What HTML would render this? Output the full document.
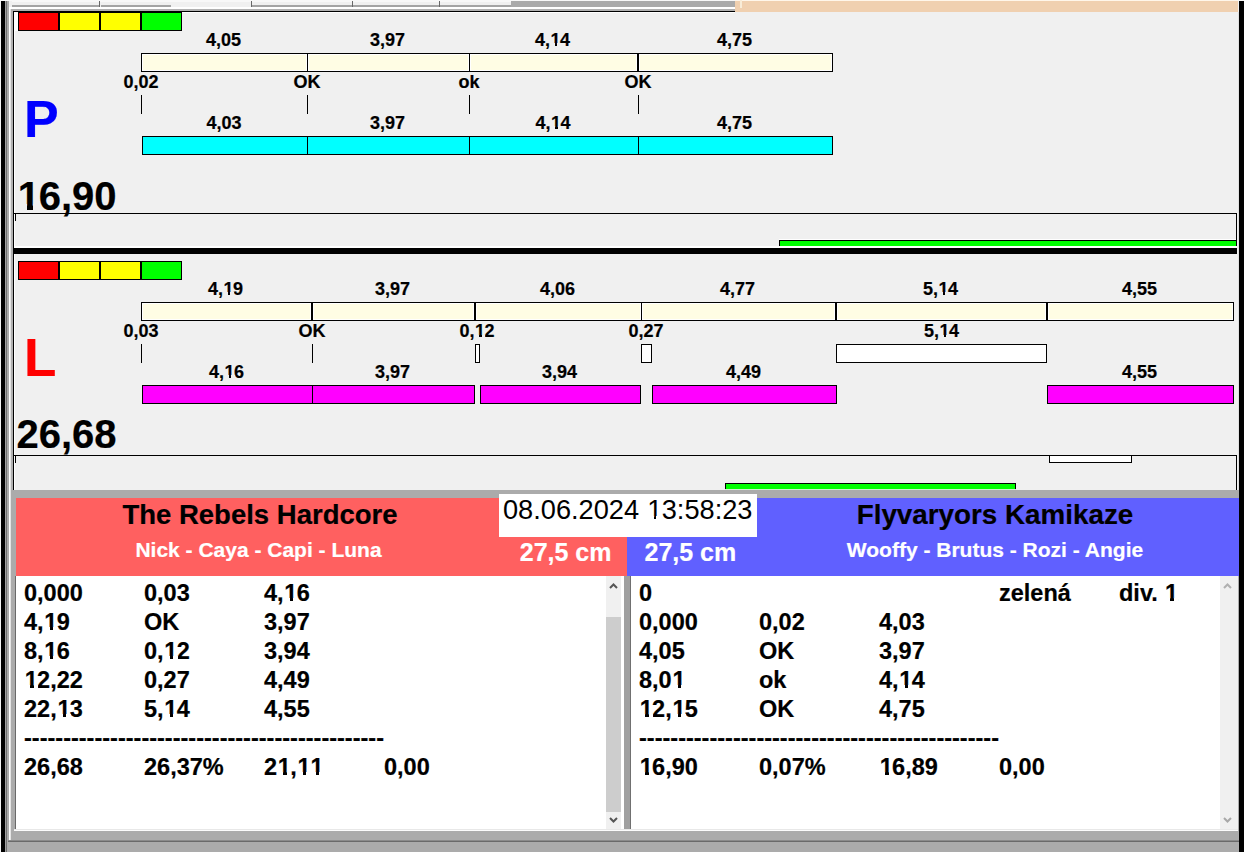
<!DOCTYPE html>
<html><head><meta charset="utf-8"><style>
html,body{margin:0;padding:0;}
body{width:1244px;height:852px;position:relative;overflow:hidden;background:#f0f0f0;font-family:"Liberation Sans", sans-serif;}
body>div,body>svg{position:absolute;}
.o,.r{position:relative;}
.o{left:0.03em;}
.r{left:0.02em;}
.o::before,.o::after,.r::before,.r::after{content:"";position:absolute;background:var(--bg);}
.o::before{left:0.02em;width:0.208em;bottom:0.17em;height:0.19em;}
.o::after{left:0.375em;width:0.19em;bottom:0.17em;height:0.19em;}
.r::before{left:0.03em;width:0.216em;bottom:0.17em;height:0.16em;}
.r::after{left:0.343em;width:0.2em;bottom:0.17em;height:0.16em;}
.t{white-space:pre;-webkit-text-stroke:0.2px currentColor;}
</style></head><body>
<div style="left:0px;top:0px;width:1px;height:852px;background:#f4f4f4;"></div>
<div style="left:1px;top:1px;width:4px;height:851px;background:#000;"></div>
<div style="left:5px;top:1px;width:1px;height:851px;background:#a0a0a0;"></div>
<div style="left:6px;top:1px;width:1px;height:851px;background:#707070;"></div>
<div style="left:7px;top:1px;width:2px;height:851px;background:#aaaaaa;"></div>
<div style="left:9px;top:7px;width:1px;height:833px;background:#fff;"></div>
<div style="left:10px;top:7px;width:1px;height:833px;background:#e4e4e4;"></div>
<div style="left:11px;top:9px;width:2px;height:481px;background:#b0b0b0;"></div>
<div style="left:13px;top:11px;width:1px;height:479px;background:#000;"></div>
<div style="left:14px;top:12px;width:1px;height:478px;background:#fff;"></div>
<div style="left:11px;top:490px;width:4px;height:350px;background:#ababab;"></div>
<div style="left:1238px;top:12px;width:1px;height:840px;background:#e0e0e0;"></div>
<div style="left:1239px;top:1px;width:5px;height:851px;background:#000;"></div>
<div style="left:0px;top:0px;width:1244px;height:1px;background:#f8f8f8;"></div>
<div style="left:12px;top:1px;width:723px;height:4px;background:#f0f0f0;"></div>
<div style="left:12px;top:1px;width:499px;height:1px;background:#f8f8f8;"></div>
<div style="left:12px;top:5px;width:87px;height:2px;background:#a4a4a4;"></div>
<div style="left:101px;top:5px;width:70px;height:2px;background:#a4a4a4;"></div>
<div style="left:251px;top:5px;width:101px;height:2px;background:#a4a4a4;"></div>
<div style="left:353px;top:5px;width:86px;height:2px;background:#a4a4a4;"></div>
<div style="left:440px;top:5px;width:71px;height:2px;background:#a4a4a4;"></div>
<div style="left:99px;top:1px;width:1px;height:6px;background:#686868;"></div>
<div style="left:251px;top:1px;width:1px;height:6px;background:#686868;"></div>
<div style="left:352px;top:1px;width:1px;height:6px;background:#686868;"></div>
<div style="left:439px;top:1px;width:1px;height:6px;background:#686868;"></div>
<div style="left:511px;top:1px;width:1px;height:6px;background:#686868;"></div>
<div style="left:511px;top:1px;width:224px;height:6px;background:#aaaaaa;"></div>
<div style="left:9px;top:7px;width:726px;height:2px;background:#fff;"></div>
<div style="left:11px;top:9px;width:724px;height:2px;background:#b0b0b0;"></div>
<div style="left:13px;top:11px;width:722px;height:1px;background:#000;"></div>
<div style="left:14px;top:12px;width:721px;height:1px;background:#fff;"></div>
<div style="left:735px;top:0px;width:503px;height:1px;background:#fff6ea;"></div>
<div style="left:735px;top:1px;width:503px;height:11px;background:#f0d0b0;"></div>
<div style="left:740px;top:0px;width:2px;height:8px;background:#f8ecd8;"></div>
<div style="left:18px;top:12px;width:41px;height:19px;background:#ff0000;box-sizing:border-box;border:1px solid #000;"></div>
<div style="left:59px;top:12px;width:41px;height:19px;background:#ffff00;box-sizing:border-box;border:1px solid #000;"></div>
<div style="left:100px;top:12px;width:41px;height:19px;background:#ffff00;box-sizing:border-box;border:1px solid #000;"></div>
<div style="left:141px;top:12px;width:41px;height:19px;background:#00ff00;box-sizing:border-box;border:1px solid #000;"></div>
<div style="left:14px;top:12px;width:4px;height:19px;background:#fff;"></div>
<div style="left:141px;top:53px;width:167px;height:19px;background:#fffde4;box-sizing:border-box;border:1px solid #000;box-shadow:inset 0 0 0 1px #fff;"></div>
<div style="left:307px;top:53px;width:163px;height:19px;background:#fffde4;box-sizing:border-box;border:1px solid #000;box-shadow:inset 0 0 0 1px #fff;"></div>
<div style="left:469px;top:53px;width:169px;height:19px;background:#fffde4;box-sizing:border-box;border:1px solid #000;box-shadow:inset 0 0 0 1px #fff;"></div>
<div style="left:638px;top:53px;width:195px;height:19px;background:#fffde4;box-sizing:border-box;border:1px solid #000;box-shadow:inset 0 0 0 1px #fff;"></div>
<div class="t" style="left:163.5px;top:29.5px;width:120px;text-align:center;font-size:18px;font-weight:700;color:#000;line-height:21.599999999999998px;--bg:#f0f0f0;">4,05</div>
<div class="t" style="left:327.5px;top:29.5px;width:120px;text-align:center;font-size:18px;font-weight:700;color:#000;line-height:21.599999999999998px;--bg:#f0f0f0;">3,97</div>
<div class="t" style="left:492.5px;top:29.5px;width:120px;text-align:center;font-size:18px;font-weight:700;color:#000;line-height:21.599999999999998px;--bg:#f0f0f0;">4,<span class="o">1</span>4</div>
<div class="t" style="left:674.5px;top:29.5px;width:120px;text-align:center;font-size:18px;font-weight:700;color:#000;line-height:21.599999999999998px;--bg:#f0f0f0;">4,75</div>
<div class="t" style="left:81.0px;top:72px;width:120px;text-align:center;font-size:18px;font-weight:700;color:#000;line-height:21.599999999999998px;--bg:#f0f0f0;">0,02</div>
<div style="left:141px;top:95px;width:1px;height:19px;background:#000;"></div>
<div class="t" style="left:247.0px;top:72px;width:120px;text-align:center;font-size:18px;font-weight:700;color:#000;line-height:21.599999999999998px;--bg:#f0f0f0;">OK</div>
<div style="left:307px;top:95px;width:1px;height:19px;background:#000;"></div>
<div class="t" style="left:409.0px;top:72px;width:120px;text-align:center;font-size:18px;font-weight:700;color:#000;line-height:21.599999999999998px;--bg:#f0f0f0;">ok</div>
<div style="left:469px;top:95px;width:1px;height:19px;background:#000;"></div>
<div class="t" style="left:578.0px;top:72px;width:120px;text-align:center;font-size:18px;font-weight:700;color:#000;line-height:21.599999999999998px;--bg:#f0f0f0;">OK</div>
<div style="left:638px;top:95px;width:1px;height:19px;background:#000;"></div>
<div style="left:142px;top:136px;width:166px;height:19px;background:#00ffff;box-sizing:border-box;border:1px solid #000;"></div>
<div style="left:307px;top:136px;width:163px;height:19px;background:#00ffff;box-sizing:border-box;border:1px solid #000;"></div>
<div style="left:469px;top:136px;width:170px;height:19px;background:#00ffff;box-sizing:border-box;border:1px solid #000;"></div>
<div style="left:638px;top:136px;width:195px;height:19px;background:#00ffff;box-sizing:border-box;border:1px solid #000;"></div>
<div class="t" style="left:164.0px;top:112.5px;width:120px;text-align:center;font-size:18px;font-weight:700;color:#000;line-height:21.599999999999998px;--bg:#f0f0f0;">4,03</div>
<div class="t" style="left:327.5px;top:112.5px;width:120px;text-align:center;font-size:18px;font-weight:700;color:#000;line-height:21.599999999999998px;--bg:#f0f0f0;">3,97</div>
<div class="t" style="left:493.0px;top:112.5px;width:120px;text-align:center;font-size:18px;font-weight:700;color:#000;line-height:21.599999999999998px;--bg:#f0f0f0;">4,<span class="o">1</span>4</div>
<div class="t" style="left:674.5px;top:112.5px;width:120px;text-align:center;font-size:18px;font-weight:700;color:#000;line-height:21.599999999999998px;--bg:#f0f0f0;">4,75</div>
<div class="t" style="left:24px;top:87.5px;font-size:52px;font-weight:700;color:#0000ff;line-height:62.4px;--bg:#f0f0f0;">P</div>
<div class="t" style="left:16.5px;top:172px;font-size:40px;font-weight:700;color:#000;line-height:48.0px;--bg:#f0f0f0;"><span class="o">1</span>6,90</div>
<div style="left:14px;top:213px;width:1223px;height:1px;background:#000;"></div>
<div style="left:1236px;top:213px;width:1px;height:35px;background:#000;"></div>
<div style="left:15px;top:214px;width:1px;height:7px;background:#000;"></div>
<div style="left:779px;top:239px;width:457px;height:1px;background:#fff;"></div>
<div style="left:779px;top:240px;width:458px;height:7px;background:#00ff00;box-sizing:border-box;border:1px solid #000;border-bottom:none;"></div>
<div style="left:14px;top:246px;width:1223px;height:2px;background:#fff;"></div>
<div style="left:13px;top:248px;width:1224px;height:6px;background:#000;"></div>
<div style="left:18px;top:261px;width:41px;height:19px;background:#ff0000;box-sizing:border-box;border:1px solid #000;"></div>
<div style="left:59px;top:261px;width:41px;height:19px;background:#ffff00;box-sizing:border-box;border:1px solid #000;"></div>
<div style="left:100px;top:261px;width:41px;height:19px;background:#ffff00;box-sizing:border-box;border:1px solid #000;"></div>
<div style="left:141px;top:261px;width:41px;height:19px;background:#00ff00;box-sizing:border-box;border:1px solid #000;"></div>
<div style="left:141px;top:302px;width:171px;height:19px;background:#fffde4;box-sizing:border-box;border:1px solid #000;box-shadow:inset 0 0 0 1px #fff;"></div>
<div style="left:312px;top:302px;width:163px;height:19px;background:#fffde4;box-sizing:border-box;border:1px solid #000;box-shadow:inset 0 0 0 1px #fff;"></div>
<div style="left:475px;top:302px;width:167px;height:19px;background:#fffde4;box-sizing:border-box;border:1px solid #000;box-shadow:inset 0 0 0 1px #fff;"></div>
<div style="left:641px;top:302px;width:195px;height:19px;background:#fffde4;box-sizing:border-box;border:1px solid #000;box-shadow:inset 0 0 0 1px #fff;"></div>
<div style="left:836px;top:302px;width:211px;height:19px;background:#fffde4;box-sizing:border-box;border:1px solid #000;box-shadow:inset 0 0 0 1px #fff;"></div>
<div style="left:1047px;top:302px;width:187px;height:19px;background:#fffde4;box-sizing:border-box;border:1px solid #000;box-shadow:inset 0 0 0 1px #fff;"></div>
<div class="t" style="left:165.5px;top:278.5px;width:120px;text-align:center;font-size:18px;font-weight:700;color:#000;line-height:21.599999999999998px;--bg:#f0f0f0;">4,<span class="o">1</span>9</div>
<div class="t" style="left:332.5px;top:278.5px;width:120px;text-align:center;font-size:18px;font-weight:700;color:#000;line-height:21.599999999999998px;--bg:#f0f0f0;">3,97</div>
<div class="t" style="left:497.5px;top:278.5px;width:120px;text-align:center;font-size:18px;font-weight:700;color:#000;line-height:21.599999999999998px;--bg:#f0f0f0;">4,06</div>
<div class="t" style="left:677.5px;top:278.5px;width:120px;text-align:center;font-size:18px;font-weight:700;color:#000;line-height:21.599999999999998px;--bg:#f0f0f0;">4,77</div>
<div class="t" style="left:880.5px;top:278.5px;width:120px;text-align:center;font-size:18px;font-weight:700;color:#000;line-height:21.599999999999998px;--bg:#f0f0f0;">5,<span class="o">1</span>4</div>
<div class="t" style="left:1079.5px;top:278.5px;width:120px;text-align:center;font-size:18px;font-weight:700;color:#000;line-height:21.599999999999998px;--bg:#f0f0f0;">4,55</div>
<div class="t" style="left:81.0px;top:321px;width:120px;text-align:center;font-size:18px;font-weight:700;color:#000;line-height:21.599999999999998px;--bg:#f0f0f0;">0,03</div>
<div class="t" style="left:252.0px;top:321px;width:120px;text-align:center;font-size:18px;font-weight:700;color:#000;line-height:21.599999999999998px;--bg:#f0f0f0;">OK</div>
<div class="t" style="left:417.0px;top:321px;width:120px;text-align:center;font-size:18px;font-weight:700;color:#000;line-height:21.599999999999998px;--bg:#f0f0f0;">0,<span class="o">1</span>2</div>
<div class="t" style="left:586.0px;top:321px;width:120px;text-align:center;font-size:18px;font-weight:700;color:#000;line-height:21.599999999999998px;--bg:#f0f0f0;">0,27</div>
<div style="left:141px;top:344px;width:1px;height:19px;background:#000;"></div>
<div style="left:312px;top:344px;width:1px;height:19px;background:#000;"></div>
<div style="left:475px;top:344px;width:5px;height:19px;background:#fff;box-sizing:border-box;border:1px solid #000;"></div>
<div style="left:641px;top:344px;width:11px;height:19px;background:#fff;box-sizing:border-box;border:1px solid #000;"></div>
<div style="left:836px;top:344px;width:211px;height:19px;background:#fff;box-sizing:border-box;border:1px solid #000;"></div>
<div class="t" style="left:881.5px;top:321px;width:120px;text-align:center;font-size:18px;font-weight:700;color:#000;line-height:21.599999999999998px;--bg:#f0f0f0;">5,<span class="o">1</span>4</div>
<div style="left:142px;top:385px;width:171px;height:19px;background:#ff00ff;box-sizing:border-box;border:1px solid #000;"></div>
<div style="left:312px;top:385px;width:163px;height:19px;background:#ff00ff;box-sizing:border-box;border:1px solid #000;"></div>
<div style="left:480px;top:385px;width:161px;height:19px;background:#ff00ff;box-sizing:border-box;border:1px solid #000;"></div>
<div style="left:652px;top:385px;width:185px;height:19px;background:#ff00ff;box-sizing:border-box;border:1px solid #000;"></div>
<div style="left:1047px;top:385px;width:187px;height:19px;background:#ff00ff;box-sizing:border-box;border:1px solid #000;"></div>
<div class="t" style="left:166.5px;top:361.5px;width:120px;text-align:center;font-size:18px;font-weight:700;color:#000;line-height:21.599999999999998px;--bg:#f0f0f0;">4,<span class="o">1</span>6</div>
<div class="t" style="left:332.5px;top:361.5px;width:120px;text-align:center;font-size:18px;font-weight:700;color:#000;line-height:21.599999999999998px;--bg:#f0f0f0;">3,97</div>
<div class="t" style="left:499.5px;top:361.5px;width:120px;text-align:center;font-size:18px;font-weight:700;color:#000;line-height:21.599999999999998px;--bg:#f0f0f0;">3,94</div>
<div class="t" style="left:683.5px;top:361.5px;width:120px;text-align:center;font-size:18px;font-weight:700;color:#000;line-height:21.599999999999998px;--bg:#f0f0f0;">4,49</div>
<div class="t" style="left:1079.5px;top:361.5px;width:120px;text-align:center;font-size:18px;font-weight:700;color:#000;line-height:21.599999999999998px;--bg:#f0f0f0;">4,55</div>
<div class="t" style="left:24px;top:326px;font-size:53px;font-weight:700;color:#ff0000;line-height:63.599999999999994px;--bg:#f0f0f0;">L</div>
<div class="t" style="left:16.5px;top:410px;font-size:40px;font-weight:700;color:#000;line-height:48.0px;--bg:#f0f0f0;">26,68</div>
<div style="left:14px;top:455px;width:1223px;height:1px;background:#000;"></div>
<div style="left:1236px;top:455px;width:1px;height:35px;background:#000;"></div>
<div style="left:15px;top:456px;width:1px;height:7px;background:#000;"></div>
<div style="left:1049px;top:455px;width:83px;height:8px;background:#fff;box-sizing:border-box;border:1px solid #000;"></div>
<div style="left:725px;top:483px;width:291px;height:6px;background:#00ff00;box-sizing:border-box;border:1px solid #000;border-bottom:none;"></div>
<div style="left:725px;top:489px;width:291px;height:1px;background:#d0f0d0;"></div>
<div style="left:11px;top:490px;width:1228px;height:362px;background:#ababab;"></div>
<div style="left:16px;top:498px;width:611px;height:78px;background:#ff6060;"></div>
<div style="left:627px;top:498px;width:612px;height:78px;background:#6060ff;"></div>
<div class="t" style="left:10.0px;top:498px;width:500px;text-align:center;font-size:27.5px;font-weight:700;color:#000;line-height:33.0px;--bg:#f0f0f0;">The Rebels Hardcore</div>
<div class="t" style="left:58.5px;top:537px;width:400px;text-align:center;font-size:21px;font-weight:700;color:#fff;line-height:25.2px;--bg:#f0f0f0;">Nick - Caya - Capi - Luna</div>
<div class="t" style="left:745.0px;top:498px;width:500px;text-align:center;font-size:27.8px;font-weight:700;color:#000;line-height:33.36px;--bg:#f0f0f0;">Flyvaryors Kamikaze</div>
<div class="t" style="left:795.0px;top:537px;width:400px;text-align:center;font-size:21px;font-weight:700;color:#fff;line-height:25.2px;--bg:#f0f0f0;">Wooffy - Brutus - Rozi - Angie</div>
<div style="left:499px;top:494px;width:258px;height:43px;background:#fff;"></div>
<div class="t" style="left:503px;top:494px;font-size:27.2px;font-weight:400;color:#000;line-height:32.64px;-webkit-text-stroke:0;--bg:#fff;">08.06.2024 <span class="r">1</span>3:58:23</div>
<div class="t" style="left:411.5px;top:537px;width:200px;text-align:right;font-size:25px;font-weight:700;color:#fff;line-height:30.0px;--bg:#f0f0f0;">27,5 cm</div>
<div class="t" style="left:644.5px;top:537px;font-size:25px;font-weight:700;color:#fff;line-height:30.0px;--bg:#f0f0f0;">27,5 cm</div>
<div style="left:15px;top:576px;width:1px;height:254px;background:#696969;"></div>
<div style="left:16px;top:576px;width:590px;height:254px;background:#fff;"></div>
<div style="left:606px;top:576px;width:16px;height:254px;background:#f0f0f0;"></div>
<div style="left:606px;top:617px;width:15px;height:195px;background:#cdcdcd;"></div>
<div style="left:621px;top:576px;width:3px;height:254px;background:#fff;"></div>
<div style="left:624px;top:576px;width:6px;height:254px;background:#a0a0a0;"></div>
<div style="left:630px;top:576px;width:1px;height:254px;background:#707070;"></div>
<div style="left:631px;top:576px;width:589px;height:254px;background:#fff;"></div>
<div style="left:1220px;top:576px;width:18px;height:254px;background:#f0f0f0;"></div>
<div style="left:14px;top:829px;width:1224px;height:1px;background:#e8e8e8;"></div>
<div style="left:14px;top:830px;width:1224px;height:1px;background:#fcfcfc;"></div>
<div style="left:8px;top:840px;width:1231px;height:1px;background:#8a8a8a;"></div>
<div style="left:8px;top:841px;width:1231px;height:1px;background:#6a6a6a;"></div>
<div style="left:7px;top:842px;width:1232px;height:10px;background:#ababab;"></div>
<svg style="left:0;top:0" width="1244" height="852"><path d="M610.0,588 L613.5,584.5 L617.0,588" stroke="#555" stroke-width="2" fill="none"/></svg>
<svg style="left:0;top:0" width="1244" height="852"><path d="M610.0,818 L613.5,821.5 L617.0,818" stroke="#555" stroke-width="2" fill="none"/></svg>
<svg style="left:0;top:0" width="1244" height="852"><path d="M1224.0,588 L1227.5,584.5 L1231.0,588" stroke="#b0b0b0" stroke-width="2" fill="none"/></svg>
<svg style="left:0;top:0" width="1244" height="852"><path d="M1224.0,818 L1227.5,821.5 L1231.0,818" stroke="#a8a8a8" stroke-width="2" fill="none"/></svg>
<div class="t" style="left:24px;top:579px;font-size:23.5px;font-weight:700;color:#000;line-height:28.2px;--bg:#fff;">0,000</div>
<div class="t" style="left:144px;top:579px;font-size:23.5px;font-weight:700;color:#000;line-height:28.2px;--bg:#fff;">0,03</div>
<div class="t" style="left:264px;top:579px;font-size:23.5px;font-weight:700;color:#000;line-height:28.2px;--bg:#fff;">4,<span class="o">1</span>6</div>
<div class="t" style="left:24px;top:608px;font-size:23.5px;font-weight:700;color:#000;line-height:28.2px;--bg:#fff;">4,<span class="o">1</span>9</div>
<div class="t" style="left:144px;top:608px;font-size:23.5px;font-weight:700;color:#000;line-height:28.2px;--bg:#fff;">OK</div>
<div class="t" style="left:264px;top:608px;font-size:23.5px;font-weight:700;color:#000;line-height:28.2px;--bg:#fff;">3,97</div>
<div class="t" style="left:24px;top:637px;font-size:23.5px;font-weight:700;color:#000;line-height:28.2px;--bg:#fff;">8,<span class="o">1</span>6</div>
<div class="t" style="left:144px;top:637px;font-size:23.5px;font-weight:700;color:#000;line-height:28.2px;--bg:#fff;">0,<span class="o">1</span>2</div>
<div class="t" style="left:264px;top:637px;font-size:23.5px;font-weight:700;color:#000;line-height:28.2px;--bg:#fff;">3,94</div>
<div class="t" style="left:24px;top:666px;font-size:23.5px;font-weight:700;color:#000;line-height:28.2px;--bg:#fff;"><span class="o">1</span>2,22</div>
<div class="t" style="left:144px;top:666px;font-size:23.5px;font-weight:700;color:#000;line-height:28.2px;--bg:#fff;">0,27</div>
<div class="t" style="left:264px;top:666px;font-size:23.5px;font-weight:700;color:#000;line-height:28.2px;--bg:#fff;">4,49</div>
<div class="t" style="left:24px;top:695px;font-size:23.5px;font-weight:700;color:#000;line-height:28.2px;--bg:#fff;">22,<span class="o">1</span>3</div>
<div class="t" style="left:144px;top:695px;font-size:23.5px;font-weight:700;color:#000;line-height:28.2px;--bg:#fff;">5,<span class="o">1</span>4</div>
<div class="t" style="left:264px;top:695px;font-size:23.5px;font-weight:700;color:#000;line-height:28.2px;--bg:#fff;">4,55</div>
<div class="t" style="left:24px;top:724px;font-size:23.5px;font-weight:700;color:#000;line-height:28.2px;--bg:#f0f0f0;">----------------------------------------------</div>
<div class="t" style="left:24px;top:753px;font-size:23.5px;font-weight:700;color:#000;line-height:28.2px;--bg:#fff;">26,68</div>
<div class="t" style="left:144px;top:753px;font-size:23.5px;font-weight:700;color:#000;line-height:28.2px;--bg:#fff;">26,37%</div>
<div class="t" style="left:264px;top:753px;font-size:23.5px;font-weight:700;color:#000;line-height:28.2px;--bg:#fff;">2<span class="o">1</span>,<span class="o">1</span><span class="o">1</span></div>
<div class="t" style="left:384px;top:753px;font-size:23.5px;font-weight:700;color:#000;line-height:28.2px;--bg:#fff;">0,00</div>
<div class="t" style="left:639px;top:579px;font-size:23.5px;font-weight:700;color:#000;line-height:28.2px;--bg:#fff;">0</div>
<div class="t" style="left:999px;top:579px;font-size:23.5px;font-weight:700;color:#000;line-height:28.2px;--bg:#fff;">zelená</div>
<div class="t" style="left:1119px;top:579px;font-size:23.5px;font-weight:700;color:#000;line-height:28.2px;--bg:#fff;">div. <span class="o">1</span></div>
<div class="t" style="left:639px;top:608px;font-size:23.5px;font-weight:700;color:#000;line-height:28.2px;--bg:#fff;">0,000</div>
<div class="t" style="left:759px;top:608px;font-size:23.5px;font-weight:700;color:#000;line-height:28.2px;--bg:#fff;">0,02</div>
<div class="t" style="left:879px;top:608px;font-size:23.5px;font-weight:700;color:#000;line-height:28.2px;--bg:#fff;">4,03</div>
<div class="t" style="left:639px;top:637px;font-size:23.5px;font-weight:700;color:#000;line-height:28.2px;--bg:#fff;">4,05</div>
<div class="t" style="left:759px;top:637px;font-size:23.5px;font-weight:700;color:#000;line-height:28.2px;--bg:#fff;">OK</div>
<div class="t" style="left:879px;top:637px;font-size:23.5px;font-weight:700;color:#000;line-height:28.2px;--bg:#fff;">3,97</div>
<div class="t" style="left:639px;top:666px;font-size:23.5px;font-weight:700;color:#000;line-height:28.2px;--bg:#fff;">8,0<span class="o">1</span></div>
<div class="t" style="left:759px;top:666px;font-size:23.5px;font-weight:700;color:#000;line-height:28.2px;--bg:#fff;">ok</div>
<div class="t" style="left:879px;top:666px;font-size:23.5px;font-weight:700;color:#000;line-height:28.2px;--bg:#fff;">4,<span class="o">1</span>4</div>
<div class="t" style="left:639px;top:695px;font-size:23.5px;font-weight:700;color:#000;line-height:28.2px;--bg:#fff;"><span class="o">1</span>2,<span class="o">1</span>5</div>
<div class="t" style="left:759px;top:695px;font-size:23.5px;font-weight:700;color:#000;line-height:28.2px;--bg:#fff;">OK</div>
<div class="t" style="left:879px;top:695px;font-size:23.5px;font-weight:700;color:#000;line-height:28.2px;--bg:#fff;">4,75</div>
<div class="t" style="left:639px;top:724px;font-size:23.5px;font-weight:700;color:#000;line-height:28.2px;--bg:#f0f0f0;">----------------------------------------------</div>
<div class="t" style="left:639px;top:753px;font-size:23.5px;font-weight:700;color:#000;line-height:28.2px;--bg:#fff;"><span class="o">1</span>6,90</div>
<div class="t" style="left:759px;top:753px;font-size:23.5px;font-weight:700;color:#000;line-height:28.2px;--bg:#fff;">0,07%</div>
<div class="t" style="left:879px;top:753px;font-size:23.5px;font-weight:700;color:#000;line-height:28.2px;--bg:#fff;"><span class="o">1</span>6,89</div>
<div class="t" style="left:999px;top:753px;font-size:23.5px;font-weight:700;color:#000;line-height:28.2px;--bg:#fff;">0,00</div>
</body></html>
